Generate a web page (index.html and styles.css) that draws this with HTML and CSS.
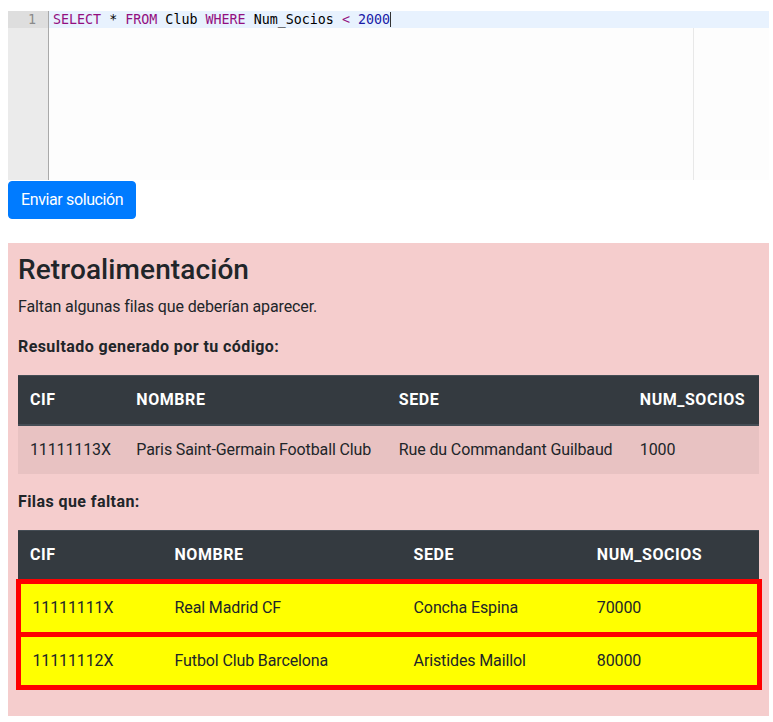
FILE: index.html
```html
<!DOCTYPE html>
<html lang="es">
<head>
<meta charset="utf-8">
<title>Ejercicio SQL</title>
<link rel="stylesheet" href="styles.css">
</head>
<body>
<div class="page">
  <div class="editor">
    <div class="gutter">
      <div class="gutter-cell active">1</div>
    </div>
    <div class="code">
      <div class="active-line"><span class="kw">SELECT</span> * <span class="kw">FROM</span> Club <span class="kw">WHERE</span> Num_Socios <span class="kw">&lt;</span> <span class="num">2000</span><span class="cursor"></span></div>
      <div class="print-margin"></div>
    </div>
  </div>
  <button class="btn">Enviar solución</button>

  <div class="feedback">
    <h3>Retroalimentación</h3>
    <p>Faltan algunas filas que deberían aparecer.</p>
    <p class="label">Resultado generado por tu código:</p>
    <table class="table striped">
      <thead>
        <tr><th>CIF</th><th>NOMBRE</th><th>SEDE</th><th>NUM_SOCIOS</th></tr>
      </thead>
      <tbody>
        <tr><td>11111113X</td><td>Paris Saint-Germain Football Club</td><td>Rue du Commandant Guilbaud</td><td>1000</td></tr>
      </tbody>
    </table>
    <p class="label">Filas que faltan:</p>
    <table class="table marked">
      <thead>
        <tr><th>CIF</th><th>NOMBRE</th><th>SEDE</th><th>NUM_SOCIOS</th></tr>
      </thead>
      <tbody>
        <tr class="missing"><td>11111111X</td><td>Real Madrid CF</td><td>Concha Espina</td><td>70000</td></tr>
        <tr class="missing"><td>11111112X</td><td>Futbol Club Barcelona</td><td>Aristides Maillol</td><td>80000</td></tr>
      </tbody>
    </table>
  </div>
</div>
</body>
</html>
```

FILE: styles.css
```css
* { box-sizing: border-box; }

body {
  margin: 0;
  font-family: Roboto, "Liberation Sans", sans-serif;
  font-size: 16px;
  line-height: 1.5;
  color: #212529;
  background: #fff;
  letter-spacing: -0.12px;
}

.page {
  width: 761px;
  margin-left: 8px;
  padding-top: 11px;
}

.editor {
  display: flex;
  height: 169px;
  font-family: "DejaVu Sans Mono", monospace;
  font-size: 13.333px;
  line-height: 17px;
  letter-spacing: 0;
  background: #fdfdfd;
}

.gutter {
  width: 41px;
  flex: none;
  background: #ebebeb;
  border-right: 1px solid #a9a9a9;
  color: #8a8a8a;
}

.gutter-cell {
  height: 17px;
  text-align: right;
  padding-right: 12px;
}

.gutter-cell.active { background: #dedede; }

.code {
  flex: 1;
  position: relative;
}

.active-line {
  height: 17px;
  padding-left: 4px;
  background: #e8f2fe;
  color: #000;
  white-space: pre;
}

.kw { color: #930f80; }
.num { color: #1a1aa6; }

.cursor {
  display: inline-block;
  width: 1px;
  height: 15px;
  background: #333;
  vertical-align: -3px;
}

.print-margin {
  position: absolute;
  left: 644px;
  top: 17px;
  bottom: 0;
  width: 1px;
  background: #e8e8e8;
}

.btn {
  display: block;
  margin: 1px 0 24px;
  padding: 6px 12px;
  border: 1px solid #007bff;
  border-radius: 4px;
  background: #007bff;
  color: #fff;
  font-family: Roboto, "Liberation Sans", sans-serif;
  font-size: 16px;
  line-height: 24px;
  letter-spacing: -0.38px;
}

.feedback {
  background: #f5cdcd;
  padding: 10px;
}

.feedback h3 {
  margin: 0 0 8px;
  font-size: 28px;
  font-weight: 500;
  line-height: 1.2;
  letter-spacing: 0.1px;
}

.feedback p {
  margin: 0 0 16px;
}

.feedback .label {
  font-weight: 700;
  letter-spacing: 0.42px;
}

.table {
  width: 100%;
  border-collapse: collapse;
  margin-bottom: 16px;
}

.table.marked {
  width: calc(100% + 5px);
  margin-left: -2.5px;
}

.table th,
.table td {
  padding: 12px;
  text-align: left;
  vertical-align: top;
  border-top: 1px solid #dee2e6;
}

.table th {
  background: #343a40;
  color: #fff;
  font-weight: 700;
  letter-spacing: 0.55px;
  border-top-color: #454d55;
  border-bottom: 2px solid #454d55;
}

.table.striped tbody tr:nth-child(odd) td {
  background: rgba(0, 0, 0, 0.05);
}

.table tr.missing {
  border: 5px solid #ff0000;
}

.table tr.missing td {
  background: #ffff00;
}
```
